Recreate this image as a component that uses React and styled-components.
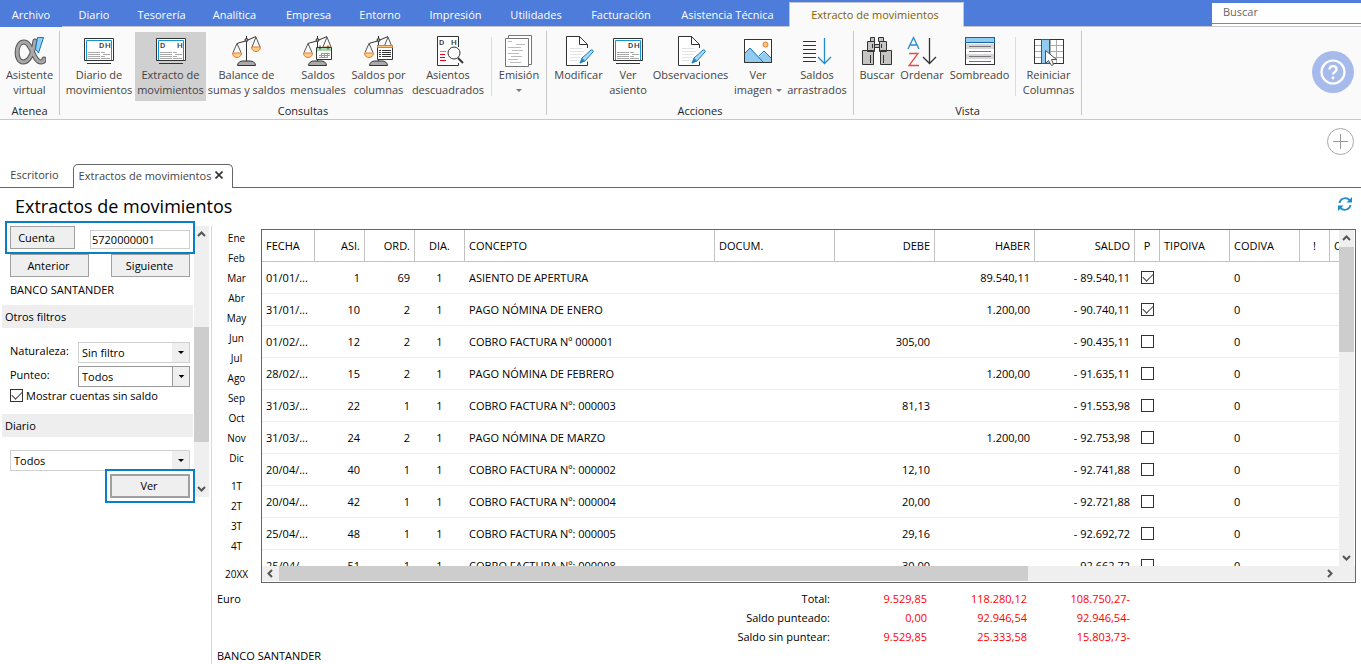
import styled, { createGlobalStyle, css } from "styled-components";

const GlobalStyle = createGlobalStyle`
  * {
    box-sizing: border-box;
  }
  body {
    margin: 0;
    background: #fff;
    color: #000;
    font-family: "Open Sans", "Noto Sans", sans-serif;
    font-size: 11px;
    line-height: 15px;
  }
  button, input, select {
    margin: 0;
    padding: 0;
    border: 0;
    border-radius: 0;
    background: none;
    color: inherit;
    font: inherit;
  }
`;

const Page = styled.div`
  display: flex;
  flex-direction: column;
  height: 100vh;
  overflow: hidden;
`;

/* menu bar */

const MenuBar = styled.header`
  display: flex;
  height: 27px;
  background: #4d7cdb;
`;
const MenuTabs = styled.nav`
  display: flex;
  flex: 1;
  align-items: flex-end;
`;
const MenuTab = styled.button`
  width: ${(p) => p.$width}px;
  height: 27px;
  padding-top: 3px;
  border-bottom: 1px solid ${(p) => (p.$first ? "#4d7cdb" : "#c3c6ce")};
  color: #fff;
  white-space: nowrap;
  ${(p) =>
    p.$active &&
    css`
      height: 25px;
      padding: 0 3px 0 0;
      border: 1px solid #c3c6ce;
      border-bottom-color: #fafafa;
      background: #fafafa;
      color: #806000;
    `}
`;
const MenuRest = styled.div`
  flex: 1;
  height: 27px;
  border-bottom: 1px solid #c3c6ce;
`;
const SearchBox = styled.div`
  width: 149px;
  height: 24px;
  margin-top: 3px;
  border-bottom: 1px solid #c3c6ce;
  background: #fff;
`;
const SearchInput = styled.input`
  display: block;
  width: 100%;
  height: 21px;
  padding: 0 11px 3px;
  border-bottom: 1px solid #888;
  &::placeholder {
    color: #666;
    opacity: 1;
  }
`;

/* ribbon */

const Ribbon = styled.section`
  display: flex;
  height: 93px;
  border-bottom: 1px solid #c8c8c8;
  background: #fafafa;
  color: #444;
`;
const Group = styled.div`
  display: flex;
  flex-direction: column;
  margin: 4px 0;
  padding: 1px 3px 0;
  border-right: 1px solid #c8c8c8;
`;
const GroupItems = styled.div`
  display: flex;
  flex: none;
  height: 69px;
`;
const GroupName = styled.div`
  padding-top: 2px;
  text-align: center;
  color: #262626;
`;
const Tool = styled.button`
  display: flex;
  flex-direction: column;
  align-items: center;
  width: ${(p) => p.$width}px;
  padding-top: 3px;
  background: ${(p) => (p.$active ? "#d0d0d0" : "transparent")};
  white-space: nowrap;
  svg {
    flex: none;
  }
`;
const ToolSplit = styled.div`
  width: 1px;
  height: 59px;
  margin: 5px 3px 0;
  background: #dcdcdc;
`;
const Caret = styled.span`
  display: inline-block;
  margin-left: ${(p) => (p.$alone ? 0 : 4)}px;
  border: 3px solid transparent;
  border-top-color: #777;
  border-bottom: 0;
  vertical-align: 2px;
`;
const HelpButton = styled.button`
  display: grid;
  place-items: center;
  width: 42px;
  height: 42px;
  margin: 24px 7px 0 auto;
  border-radius: 50%;
  background: #a6baeb;
`;

/* open documents */

const AddRow = styled.div`
  display: flex;
  justify-content: flex-end;
  align-items: center;
  height: 44px;
  padding: 0 7px 2px 0;
`;
const AddButton = styled.button`
  display: grid;
  place-items: center;
  width: 27px;
  height: 27px;
  border: 1px solid #a8a8a8;
  border-radius: 50%;
`;
const DocTabs = styled.nav`
  display: flex;
  height: 24px;
  border-bottom: 1px solid #666;
  color: #444;
`;
const DocTab = styled.button`
  display: flex;
  align-items: center;
  justify-content: center;
  gap: 4px;
  width: ${(p) => p.$width}px;
  height: 24px;
  padding: 0 4px 3px 0;
  white-space: nowrap;
  ${(p) =>
    p.$active &&
    css`
      border: 1px solid #666;
      border-bottom: 0;
      border-radius: 5px 5px 0 0;
      background: #fff;
    `}
`;
const TitleRow = styled.div`
  display: flex;
  align-items: center;
  justify-content: space-between;
  height: 38px;
  padding: 0 8px 3px 15px;
`;
const Title = styled.h1`
  margin: 0;
  font-size: 18px;
  font-weight: 400;
  line-height: 24px;
`;

/* filters */

const Workspace = styled.main`
  display: flex;
  flex: 1;
  min-height: 0;
`;
const Sidebar = styled.aside`
  display: flex;
  align-items: flex-start;
  width: 212px;
  border-right: 1px solid #d8d8d8;
`;
const Filters = styled.form`
  width: 194px;
`;
const FilterRow = styled.div`
  display: flex;
  justify-content: space-between;
  align-items: flex-end;
  margin: 0 4px ${(p) => p.$gap || 0}px 10px;
  ${(p) =>
    p.$marked &&
    css`
      position: relative;
      outline: 2px solid #0a80c4;
      outline-offset: 3px;
    `}
`;
const FilterButton = styled.button`
  width: ${(p) => p.$width}px;
  height: 23px;
  padding-right: ${(p) => p.$shift || 2}px;
  border: 1px solid #a0a0a0;
  background: #efefef;
`;
const ViewButton = styled(FilterButton)`
  position: relative;
  height: 24px;
  margin-left: auto;
  padding-bottom: 2px;
  border-width: 2px;
  outline: 2px solid #0a80c4;
  outline-offset: 3px;
`;
const AccountInput = styled.input`
  width: 100px;
  height: 19px;
  padding: 0 1px 1px;
  border: 1px solid #d0d0d0;
  background: #fff;
`;
const AccountName = styled.div`
  padding: 5px 10px 8px;
`;
const SectionName = styled.h2`
  height: 23px;
  margin: 0 1px ${(p) => p.$gap}px 2px;
  padding: 4px 3px;
  background: #eee;
  font-size: 11px;
  font-weight: 400;
  line-height: 15px;
`;
const FilterLabel = styled.label`
  align-self: center;
  padding-bottom: 4px;
`;
const SelectBox = styled.div`
  display: grid;
  grid-template-columns: 1fr 17px;
  width: ${(p) => p.$width}px;
  height: 21px;
  border: 1px solid ${(p) => (p.$strong ? "#999" : "#d0d0d0")};
  svg {
    grid-area: 1 / 2;
    width: 100%;
    height: 100%;
    border-left: ${(p) => (p.$strong ? "1px solid #999" : "0")};
    background: #efefef;
    pointer-events: none;
  }
  select {
    grid-area: 1 / 1 / 2 / 3;
    padding-left: 3px;
    appearance: none;
  }
`;
const CheckLabel = styled.label`
  display: flex;
  align-items: center;
  gap: 3px;
  height: 15px;
  margin: 1px 0 11px 10px;
`;
const CheckInput = styled.input.attrs({ type: "checkbox" })`
  display: block;
  width: 13px;
  height: 13px;
  border: 1px solid #333;
  background: #fff;
  appearance: none;
  &:checked::before {
    content: "";
    display: block;
    width: 9px;
    height: 5px;
    margin: 1px 0 0 1px;
    border: solid #444;
    border-width: 0 0 1px 1px;
    transform: rotate(-45deg);
  }
`;

/* scrollbars */

const Bar = styled.div`
  display: flex;
  flex-direction: ${(p) => (p.$row ? "row" : "column")};
  background: #efefef;
  button {
    display: grid;
    place-items: center;
    flex: none;
    width: 17px;
    height: 17px;
  }
`;
const SideBar = styled(Bar)`
  width: 15px;
  height: 271px;
  button {
    width: 15px;
  }
`;
const GridBarV = styled(Bar)`
  grid-area: 1 / 2;
  margin-right: 1px;
  button {
    width: 15px;
  }
`;
const GridBarH = styled(Bar)`
  grid-area: 2 / 1 / 3 / 3;
  padding-right: 17px;
  margin-bottom: 1px;
  button {
    height: 15px;
  }
`;
const Before = styled.div`
  flex: ${(p) => p.$share};
`;
const Thumb = styled.div`
  flex: ${(p) => p.$share};
  background: #cdcdcd;
`;

/* periods */

const Periods = styled.div`
  display: flex;
  flex-direction: column;
  width: 49px;
  padding-top: 2px;
`;
const Period = styled.button`
  height: 20px;
  margin-bottom: ${(p) => (p.$last ? 8 : 0)}px;
  font-size: 10px;
  line-height: 20px;
`;

/* entries */

const Content = styled.section`
  display: flex;
  flex: 1;
  flex-direction: column;
  min-width: 0;
`;
const Upper = styled.div`
  display: flex;
  flex: 1;
  min-height: 0;
`;
const Grid = styled.div`
  display: grid;
  flex: 1;
  grid-template-columns: 1fr 16px;
  grid-template-rows: minmax(0, 1fr) 16px;
  min-width: 0;
  margin: 3px 5px 0 0;
  border: 1px solid #666;
`;
const TableClip = styled.div`
  min-height: 0;
  overflow: hidden;
`;
const EntryTable = styled.table`
  width: 100%;
  border-spacing: 0;
  table-layout: fixed;
`;
const HeadCell = styled.th`
  height: 32px;
  padding: 0 4px;
  overflow: hidden;
  border-right: 1px solid #c3c3c3;
  border-bottom: 1px solid #c3c3c3;
  font-weight: 400;
  text-align: ${(p) => p.$align || "left"};
  white-space: nowrap;
  &:last-child {
    padding-right: 0;
    border-right: 0;
  }
`;
const Cell = styled.td`
  height: 32px;
  padding: 0 4px 1px;
  overflow: hidden;
  border-right: 1px solid transparent;
  border-bottom: 1px solid #eee;
  text-align: ${(p) => p.$align || "left"};
  white-space: nowrap;
  &:last-child {
    padding: 0;
    border-right: 0;
  }
  input {
    margin: 0 auto;
  }
`;

/* totals */

const Summary = styled.footer`
  display: flex;
  flex-direction: column;
  justify-content: space-between;
  height: 81px;
  padding-left: 5px;
`;
const TotalsRow = styled.div`
  display: flex;
  padding-top: 6px;
`;
const Currency = styled.div`
  width: 413px;
  padding-top: 2px;
`;
const Totals = styled.table`
  width: 500px;
  border-spacing: 0;
  table-layout: fixed;
  th,
  td {
    height: 19px;
    padding: 0;
    font-weight: 400;
    text-align: right;
  }
  td {
    color: #f00;
  }
`;
const Holder = styled.div`
  padding-bottom: 1px;
`;

/* icons */

function Icon({ children, size = 32 }) {
  return (
    <svg width={size} height="32" viewBox={`0 0 ${size} 32`} fill="none" stroke="#333" aria-hidden="true">
      {children}
    </svg>
  );
}

const Letters = styled.text`
  fill: #333;
  stroke: none;
  font-family: Roboto, sans-serif;
  font-size: 8px;
  font-weight: 500;
`;

const AtenaIcon = () => (
  <Icon>
    <g strokeLinecap="round">
      <path d="M21 6C19 18 15 27 9 27 1 27 1 7 10 7c8 0 9 20 17 20 2 0 3-1 3-3" stroke="#555" strokeWidth="5" />
      <path d="M21 6C19 18 15 27 9 27 1 27 1 7 10 7c8 0 9 20 17 20 2 0 3-1 3-3" stroke="#a8a8a8" strokeWidth="3" />
    </g>
    <path d="M23.500 2.500h6L24.500 18l-3-4z" fill="#8fd0fa" stroke="#1a6fb5" />
  </Icon>
);

const LedgerIcon = ({ apart }) => (
  <Icon>
    <path d="M1.500 3.500h29v22h-29z" fill="#fff" />
    <path d="M3.500 25V5.500h25V25" stroke="#1296d4" />
    {apart ? (
      <>
        <Letters x="5" y="13">D</Letters>
        <Letters x="22" y="13">H</Letters>
      </>
    ) : (
      <>
        <Letters x="16" y="13">D</Letters>
        <Letters x="22" y="13">H</Letters>
      </>
    )}
    <path d="M5 17.500h12M5 19.500h12M5 21.500h12M5 23.500h12M18 17.500h4M20 19.500h7M18 21.500h4M18 23.500h9" stroke="#aaa" />
    <path d="M4 28.500h24" />
  </Icon>
);

const ScaleShape = () => (
  <>
    <path d="M15.500 1v25M6 8.500l3-1 4-1 5-2 7-3" />
    <circle cx="15.500" cy="5" r="1.500" fill="#999" />
    <path d="M6 8.500l-4 9M6 8.500l4 9M25 2l-4 10M25 2l4 10" stroke="#555" />
    <path d="M1.500 18h9c0 6-9 6-9 0zM20.500 12h9c0 6-9 6-9 0z" fill="#fbd08a" stroke="#e77c2b" />
    <path d="M6.500 30.500c0-3 3-4.500 5-4.500h8c2 0 5 1.500 5 4.500z" fill="#aaa" />
  </>
);

const ScaleIcon = () => (
  <Icon>
    <ScaleShape />
  </Icon>
);

const ScaleMonthIcon = () => (
  <Icon>
    <ScaleShape />
    <path d="M14.500 12.500h15v12h-15z" fill="#fff" />
    <path d="M15 13h14v3H15z" fill="#a9d8ae" stroke="none" />
    <path d="M18 10.500v4M26 10.500v4" />
    <path d="M19 18.500h9M17 20.500h11M17 22.500h9M19.500 18v5M22.500 18v5M25.500 18v5" stroke="#999" />
  </Icon>
);

const ScaleColumnsIcon = () => (
  <Icon>
    <ScaleShape />
    <path d="M14.500 10.500h15v14h-15z" fill="#fff" />
    <path d="M14.500 10.500h15v2h-15z" fill="#fbc580" stroke="#e77c2b" />
    <path d="M16 15.500h2M19 15.500h9M16 17.500h2M19 17.500h9M16 19.500h2M19 19.500h9M16 21.500h2M19 21.500h9" />
  </Icon>
);

const UnbalancedIcon = () => (
  <Icon>
    <path d="M26.500 12V1.500h-21v29h21V28" fill="#fff" />
    <Letters x="7" y="10">D</Letters>
    <Letters x="19" y="10">H</Letters>
    <path d="M8 16.500h6" stroke="#999" />
    <path d="M8 19.500h5M8 22.500h5M8 25.500h6" stroke="#e2001a" />
    <circle cx="22" cy="18" r="6" fill="#fafafa" />
    <path d="M26 23l5 5" strokeWidth="2" />
  </Icon>
);

const PrintIcon = () => (
  <Icon>
    <path d="M5.500 .500h23v29h-23z" fill="#fff" stroke="#777" />
    <path d="M2.500 3.500h23v28h-23z" fill="#fff" stroke="#777" />
    <path d="M5 6.500h4M13 9.500h9M5 12.500h13M9 15.500h11M5 18.500h11M8 21.500h11M5 24.500h10M7 27.500h11" stroke="#bbb" />
  </Icon>
);

const EditIcon = () => (
  <Icon>
    <path d="M24.500 13V9.500L16.500 1.500h-13v29h21v-4" fill="#fff" />
    <path d="M16.500 1.500v8h8" />
    <path d="M7 13.500h12M7 16.500h14M7 19.500h12M7 22.500h10M7 25.500h9" stroke="#e3e3e3" />
    <path d="M17 28l2-5 9-8c1-1 3 1 2 2l-8 9z" fill="#a8d8f4" stroke="#2280c0" />
    <path d="M17 28l2-5 3 3z" fill="#2280c0" stroke="none" />
  </Icon>
);

const ImageIcon = () => (
  <Icon>
    <path d="M2.500 4.500h27v23h-27z" fill="#fff" />
    <circle cx="23.500" cy="9.500" r="2.500" fill="#fbc580" stroke="#e77c2b" />
    <path d="M3 18l5-5 9 9 5-5 7 6v4H3z" fill="#92cbf0" stroke="none" />
    <path d="M3 18l5-5 13 14M17 21l5-5 7 7" stroke="#1a6fb5" />
    <path d="M2.500 4.500h27v23h-27z" />
  </Icon>
);

const DragIcon = () => (
  <Icon>
    <path d="M2 6.500h13M2 10.500h13M2 14.500h13M2 18.500h13M2 22.500h13M2 26.500h13" />
    <path d="M23.500 3v26M17 22l6.500 6.500L30 22" stroke="#258bd0" strokeWidth="1.300" />
  </Icon>
);

const BinocularsIcon = () => (
  <Icon>
    <g fill="#c6c4c2">
      <path d="M9.500 2.500h4v4h-4zM17.500 2.500h5v4h-5zM6.500 6.500h7v10h-7zM18.500 6.500h7v10h-7zM13.500 9.500h5v3h-5zM1.500 15.500h11v14h-11zM19.500 15.500h11v14h-11z" />
      <path d="M11.500 9v4M20.500 9v4M9.500 20v8M22.500 20v8" />
    </g>
  </Icon>
);

const SortIcon = () => (
  <Icon>
    <path d="M2 14L7.500 2.500 13 14M4 10h7" stroke="#258bd0" strokeWidth="1.300" />
    <path d="M3 18.500h9L3 30.500h10" stroke="#ec4a4a" strokeWidth="1.300" />
    <path d="M23.500 3v26M17 22l6.500 6.500L30 22" strokeWidth="1.300" />
  </Icon>
);

const ShadeIcon = () => (
  <Icon>
    <path d="M1.500 2.500h29v27h-29z" fill="#fff" />
    <path d="M2 9h28v5H2zM2 19h28v5H2z" fill="#d8d6d8" stroke="none" />
    <path d="M5 11.500h22M5 16.500h22M5 21.500h22M5 26.500h22" stroke="#777" />
    <path d="M1.500 2.500h29v27h-29z" />
    <path d="M1.500 2.500h29v5h-29z" fill="#92cbf0" stroke="#1266a8" />
  </Icon>
);

const ResetIcon = () => (
  <Icon>
    <path d="M1.500 4.500h29v24h-29z" fill="#fff" />
    <path d="M2 10.500h28M2 16.500h28M2 22.500h28M17.500 5v23M23.500 5v23" stroke="#aaa" />
    <path d="M1.500 4.500h29v24h-29z" />
    <path d="M8.500 4.500h8v24h-8z" fill="#92cbf0" stroke="#1266a8" />
    <path d="M12.500 15.500v13l3-3 3 5 2-1-2-5h5z" fill="#fff" stroke="#555" />
  </Icon>
);

const HelpIcon = () => (
  <svg width="26" height="26" viewBox="0 0 26 26" fill="none" stroke="#fff" aria-hidden="true">
    <circle cx="13" cy="13" r="11.500" strokeWidth="2.200" />
    <path d="M9.500 10.500c0-4.500 7-4.500 7 0 0 2.500-3.500 2.500-3.500 5" strokeWidth="2.400" />
    <circle cx="13" cy="19" r="1.400" fill="#fff" stroke="none" />
  </svg>
);

const RefreshIcon = () => (
  <svg width="16" height="16" viewBox="0 0 16 16" fill="none" stroke="#1f8acb" strokeWidth="1.800" aria-hidden="true">
    <path d="M2.500 7C3 2.500 9 .500 12.500 4M13.500 9c-.500 4.500-6.500 6.500-10 3" />
    <path d="M15 1v5.500H9.500zM1 15V9.500h5.500z" fill="#1f8acb" stroke="none" />
  </svg>
);

const PlusIcon = () => (
  <svg width="15" height="15" viewBox="0 0 15 15" stroke="#999" aria-hidden="true">
    <path d="M7.500 0v15M0 7.500h15" />
  </svg>
);

const CloseIcon = () => (
  <svg width="8" height="8" viewBox="0 0 8 8" stroke="#333" strokeWidth="1.600" aria-hidden="true">
    <path d="M.500 .500l7 7M7.500 .500l-7 7" />
  </svg>
);

const arrows = {
  up: "M1 6l3.500-3.500L8 6",
  down: "M1 3l3.500 3.500L8 3",
  left: "M6 1L2.500 4.500 6 8",
  right: "M3 1l3.500 3.500L3 8",
};

const ArrowIcon = ({ to }) => (
  <svg width="9" height="9" viewBox="0 0 9 9" fill="none" stroke="#555" strokeWidth="2" aria-hidden="true">
    <path d={arrows[to]} />
  </svg>
);

const menu = [
  ["Archivo", 62],
  ["Diario", 64],
  ["Tesorería", 71],
  ["Analítica", 75],
  ["Empresa", 73],
  ["Entorno", 70],
  ["Impresión", 81],
  ["Utilidades", 80],
  ["Facturación", 90],
  ["Asistencia Técnica", 123],
  ["Extracto de movimientos", 175],
];

const groups = [
  {
    name: "Atenea",
    tools: [{ lines: ["Asistente", "virtual"], width: 53, icon: <AtenaIcon /> }],
  },
  {
    name: "Consultas",
    tools: [
      { lines: ["Diario de", "movimientos"], width: 72, icon: <LedgerIcon /> },
      { lines: ["Extracto de", "movimientos"], width: 71, icon: <LedgerIcon apart />, active: true },
      { lines: ["Balance de", "sumas y saldos"], width: 81, icon: <ScaleIcon /> },
      { lines: ["Saldos", "mensuales"], width: 62, icon: <ScaleMonthIcon /> },
      { lines: ["Saldos por", "columnas"], width: 59, icon: <ScaleColumnsIcon /> },
      { lines: ["Asientos", "descuadrados"], width: 80, icon: <UnbalancedIcon /> },
      { lines: ["Emisión", ""], width: 48, icon: <PrintIcon />, split: true, caret: true },
    ],
  },
  {
    name: "Acciones",
    tools: [
      { lines: ["Modificar", ""], width: 57, icon: <EditIcon /> },
      { lines: ["Ver", "asiento"], width: 42, icon: <LedgerIcon /> },
      { lines: ["Observaciones", ""], width: 83, icon: <EditIcon /> },
      { lines: ["Ver", "imagen"], width: 52, icon: <ImageIcon />, caret: true },
      { lines: ["Saldos", "arrastrados"], width: 66, icon: <DragIcon /> },
    ],
  },
  {
    name: "Vista",
    tools: [
      { lines: ["Buscar", ""], width: 40, icon: <BinocularsIcon /> },
      { lines: ["Ordenar", ""], width: 50, icon: <SortIcon /> },
      { lines: ["Sombreado", ""], width: 65, icon: <ShadeIcon /> },
      { lines: ["Reiniciar", "Columnas"], width: 59, icon: <ResetIcon />, split: true },
    ],
  },
];

const months = ["Ene", "Feb", "Mar", "Abr", "May", "Jun", "Jul", "Ago", "Sep", "Oct", "Nov", "Dic"];
const quarters = ["1T", "2T", "3T", "4T"];

const columns = [
  { name: "FECHA", width: 53 },
  { name: "ASI.", width: 50, align: "right" },
  { name: "ORD.", width: 50, align: "right" },
  { name: "DIA.", width: 50, align: "center" },
  { name: "CONCEPTO", width: 250 },
  { name: "DOCUM.", width: 120 },
  { name: "DEBE", width: 100, align: "right" },
  { name: "HABER", width: 100, align: "right" },
  { name: "SALDO", width: 100, align: "right" },
  { name: "P", width: 25, align: "center" },
  { name: "TIPOIVA", width: 70 },
  { name: "CODIVA", width: 70 },
  { name: "!", width: 30, align: "center" },
  { name: "C" },
];

const entries = [
  ["01/01/...", "1", "69", "ASIENTO DE APERTURA", "", "89.540,11", "- 89.540,11", true],
  ["31/01/...", "10", "2", "PAGO NÓMINA DE ENERO", "", "1.200,00", "- 90.740,11", true],
  ["01/02/...", "12", "2", "COBRO FACTURA Nº 000001", "305,00", "", "- 90.435,11", false],
  ["28/02/...", "15", "2", "PAGO NÓMINA DE FEBRERO", "", "1.200,00", "- 91.635,11", false],
  ["31/03/...", "22", "1", "COBRO FACTURA Nº: 000003", "81,13", "", "- 91.553,98", false],
  ["31/03/...", "24", "2", "PAGO NÓMINA DE MARZO", "", "1.200,00", "- 92.753,98", false],
  ["20/04/...", "40", "1", "COBRO FACTURA Nº: 000002", "12,10", "", "- 92.741,88", false],
  ["20/04/...", "42", "1", "COBRO FACTURA Nº: 000004", "20,00", "", "- 92.721,88", false],
  ["25/04/...", "48", "1", "COBRO FACTURA Nº: 000005", "29,16", "", "- 92.692,72", false],
  ["25/04/...", "51", "1", "COBRO FACTURA Nº: 000008", "30,00", "", "- 92.662,72", false],
];

const totals = [
  ["Total:", "9.529,85", "118.280,12", "108.750,27-"],
  ["Saldo punteado:", "0,00", "92.946,54", "92.946,54-"],
  ["Saldo sin puntear:", "9.529,85", "25.333,58", "15.803,73-"],
];

function Select({ id, value, label, width, strong }) {
  return (
    <SelectBox $width={width} $strong={strong}>
      <svg viewBox="0 0 17 19" aria-hidden="true">
        <path d="M6 8h6l-3 3z" fill="#000" />
      </svg>
      <select id={id} aria-label={label} defaultValue={value}>
        <option>{value}</option>
      </select>
    </SelectBox>
  );
}

function Scroll({ as: Track, row, before, thumb, after }) {
  return (
    <Track $row={row}>
      <button type="button" aria-label={row ? "Izquierda" : "Arriba"}>
        <ArrowIcon to={row ? "left" : "up"} />
      </button>
      <Before $share={before} />
      <Thumb $share={thumb} />
      <Before $share={after} />
      <button type="button" aria-label={row ? "Derecha" : "Abajo"}>
        <ArrowIcon to={row ? "right" : "down"} />
      </button>
    </Track>
  );
}

function RibbonGroup({ name, tools }) {
  return (
    <Group>
      <GroupItems>
        {tools.map((tool) => [
          tool.split && <ToolSplit key={tool.lines[0] + "-split"} />,
          <Tool key={tool.lines.join(" ")} type="button" $width={tool.width} $active={tool.active}>
            {tool.icon}
            <span>{tool.lines[0]}</span>
            <span>
              {tool.lines[1]}
              {tool.caret && <Caret $alone={!tool.lines[1]} />}
            </span>
          </Tool>,
        ])}
      </GroupItems>
      <GroupName>{name}</GroupName>
    </Group>
  );
}

function FilterPanel() {
  return (
    <Sidebar>
      <Filters onSubmit={(e) => e.preventDefault()}>
        <FilterRow $marked $gap={5}>
          <FilterButton type="button" $width={65} $shift={12}>Cuenta</FilterButton>
          <AccountInput aria-label="Cuenta" defaultValue="5720000001" />
        </FilterRow>
        <FilterRow>
          <FilterButton type="button" $width={79}>Anterior</FilterButton>
          <FilterButton type="button" $width={79}>Siguiente</FilterButton>
        </FilterRow>
        <AccountName>BANCO SANTANDER</AccountName>
        <SectionName $gap={14}>Otros filtros</SectionName>
        <FilterRow $gap={3}>
          <FilterLabel htmlFor="naturaleza">Naturaleza:</FilterLabel>
          <Select id="naturaleza" value="Sin filtro" width={112} />
        </FilterRow>
        <FilterRow>
          <FilterLabel htmlFor="punteo">Punteo:</FilterLabel>
          <Select id="punteo" value="Todos" width={112} strong />
        </FilterRow>
        <CheckLabel>
          <CheckInput defaultChecked />
          Mostrar cuentas sin saldo
        </CheckLabel>
        <SectionName $gap={13}>Diario</SectionName>
        <FilterRow $gap={3}>
          <Select label="Diario" value="Todos" width={180} />
        </FilterRow>
        <FilterRow>
          <ViewButton type="submit" $width={80}>Ver</ViewButton>
        </FilterRow>
      </Filters>
      <Scroll as={SideBar} before={84} thumb={115} after={38} />
    </Sidebar>
  );
}

function Entries() {
  return (
    <EntryTable>
      <colgroup>
        {columns.map((col) => (
          <col key={col.name} width={col.width} />
        ))}
      </colgroup>
      <thead>
        <tr>
          {columns.map((col) => (
            <HeadCell key={col.name} scope="col" $align={col.align}>
              {col.name}
            </HeadCell>
          ))}
        </tr>
      </thead>
      <tbody>
        {entries.map(([date, number, order, concept, debit, credit, balance, checked]) => (
          <tr key={number}>
            <Cell>{date}</Cell>
            <Cell $align="right">{number}</Cell>
            <Cell $align="right">{order}</Cell>
            <Cell $align="center">1</Cell>
            <Cell>{concept}</Cell>
            <Cell />
            <Cell $align="right">{debit}</Cell>
            <Cell $align="right">{credit}</Cell>
            <Cell $align="right">{balance}</Cell>
            <Cell>
              <CheckInput aria-label={`Punteado ${number}`} defaultChecked={checked} />
            </Cell>
            <Cell />
            <Cell>0</Cell>
            <Cell />
            <Cell />
          </tr>
        ))}
      </tbody>
    </EntryTable>
  );
}

const App = () => {
  return (
    <Page>
      <GlobalStyle />
      <MenuBar>
        <MenuTabs>
          {menu.map(([name, width], i) => (
            <MenuTab key={name} type="button" $width={width} $first={i === 0} $active={i === menu.length - 1}>
              {name}
            </MenuTab>
          ))}
          <MenuRest />
        </MenuTabs>
        <SearchBox>
          <SearchInput type="search" aria-label="Buscar" placeholder="Buscar" />
        </SearchBox>
      </MenuBar>
      <Ribbon>
        {groups.map((group) => (
          <RibbonGroup key={group.name} {...group} />
        ))}
        <HelpButton type="button" aria-label="Ayuda">
          <HelpIcon />
        </HelpButton>
      </Ribbon>
      <AddRow>
        <AddButton type="button" aria-label="Añadir">
          <PlusIcon />
        </AddButton>
      </AddRow>
      <DocTabs>
        <DocTab type="button" $width={73}>Escritorio</DocTab>
        <DocTab type="button" $width={160} $active>
          Extractos de movimientos
          <CloseIcon />
        </DocTab>
      </DocTabs>
      <TitleRow>
        <Title>Extractos de movimientos</Title>
        <button type="button" aria-label="Actualizar">
          <RefreshIcon />
        </button>
      </TitleRow>
      <Workspace>
        <FilterPanel />
        <Content>
          <Upper>
            <Periods>
              {months.map((name, i) => (
                <Period key={name} type="button" $last={i === months.length - 1}>
                  {name}
                </Period>
              ))}
              {quarters.map((name, i) => (
                <Period key={name} type="button" $last={i === quarters.length - 1}>
                  {name}
                </Period>
              ))}
              <Period type="button">20XX</Period>
            </Periods>
            <Grid>
              <TableClip>
                <Entries />
              </TableClip>
              <Scroll as={GridBarV} before={0} thumb={105} after={196} />
              <Scroll as={GridBarH} row before={0} thumb={749} after={293} />
            </Grid>
          </Upper>
          <Summary>
            <TotalsRow>
              <Currency>Euro</Currency>
              <Totals>
                <colgroup>
                  <col width="200" />
                  <col width="97" />
                  <col width="100" />
                  <col width="103" />
                </colgroup>
                <tbody>
                  {totals.map(([name, ...amounts]) => (
                    <tr key={name}>
                      <th scope="row">{name}</th>
                      {amounts.map((amount, i) => (
                        <td key={i}>{amount}</td>
                      ))}
                    </tr>
                  ))}
                </tbody>
              </Totals>
            </TotalsRow>
            <Holder>BANCO SANTANDER</Holder>
          </Summary>
        </Content>
      </Workspace>
    </Page>
  );
};

export default App;
